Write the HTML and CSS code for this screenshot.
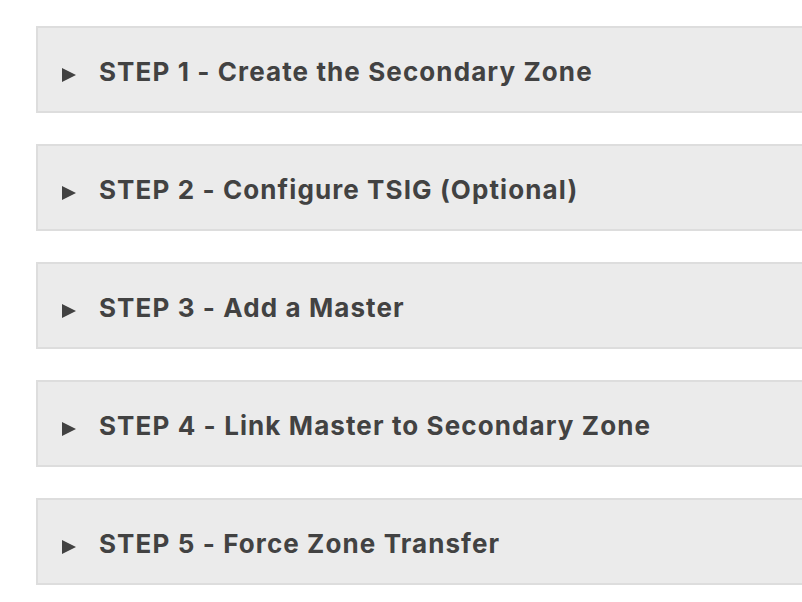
FILE: index.html
```html
<!DOCTYPE html>
<html lang="en">

<head>
    <meta charset="UTF-8">
    <meta name="viewport" content="width=device-width, initial-scale=1.0">
    <title>Secondary Zone</title>
    <link rel="stylesheet" href="styles.css">
</head>

<body>
    <div class="steps">
        <details class="step">
            <summary>STEP 1 - Create the Secondary Zone</summary>
        </details>
        <details class="step">
            <summary>STEP 2 - Configure TSIG (Optional)</summary>
        </details>
        <details class="step">
            <summary>STEP 3 - Add a Master</summary>
        </details>
        <details class="step">
            <summary>STEP 4 - Link Master to Secondary Zone</summary>
        </details>
        <details class="step">
            <summary>STEP 5 - Force Zone Transfer</summary>
        </details>
    </div>
</body>

</html>
```

FILE: styles.css
```css
body {
    font-family: Inter, "Liberation Sans", sans-serif;
    margin: 0;
    padding: 0;
    background-color: #fff;
}

.steps {
    display: flex;
    flex-direction: column;
    gap: 31px;
    padding: 26px 0 0 36px;
}

.step {
    background-color: #ebebeb;
    border: 2px solid #dddddd;
    border-right: none;
}

.step summary {
    display: flex;
    align-items: center;
    gap: 23px;
    list-style: none;
    padding: 28px 0 24px 24px;
    font-size: 26px;
    line-height: 31px;
    font-weight: 700;
    letter-spacing: 1.1px;
    color: #424242;
    cursor: pointer;
}

.step summary::-webkit-details-marker {
    display: none;
}

.step summary::before {
    content: "";
    width: 0;
    height: 0;
    margin-top: 7px;
    border-left: 14px solid #424242;
    border-top: 7px solid transparent;
    border-bottom: 7px solid transparent;
}
```
